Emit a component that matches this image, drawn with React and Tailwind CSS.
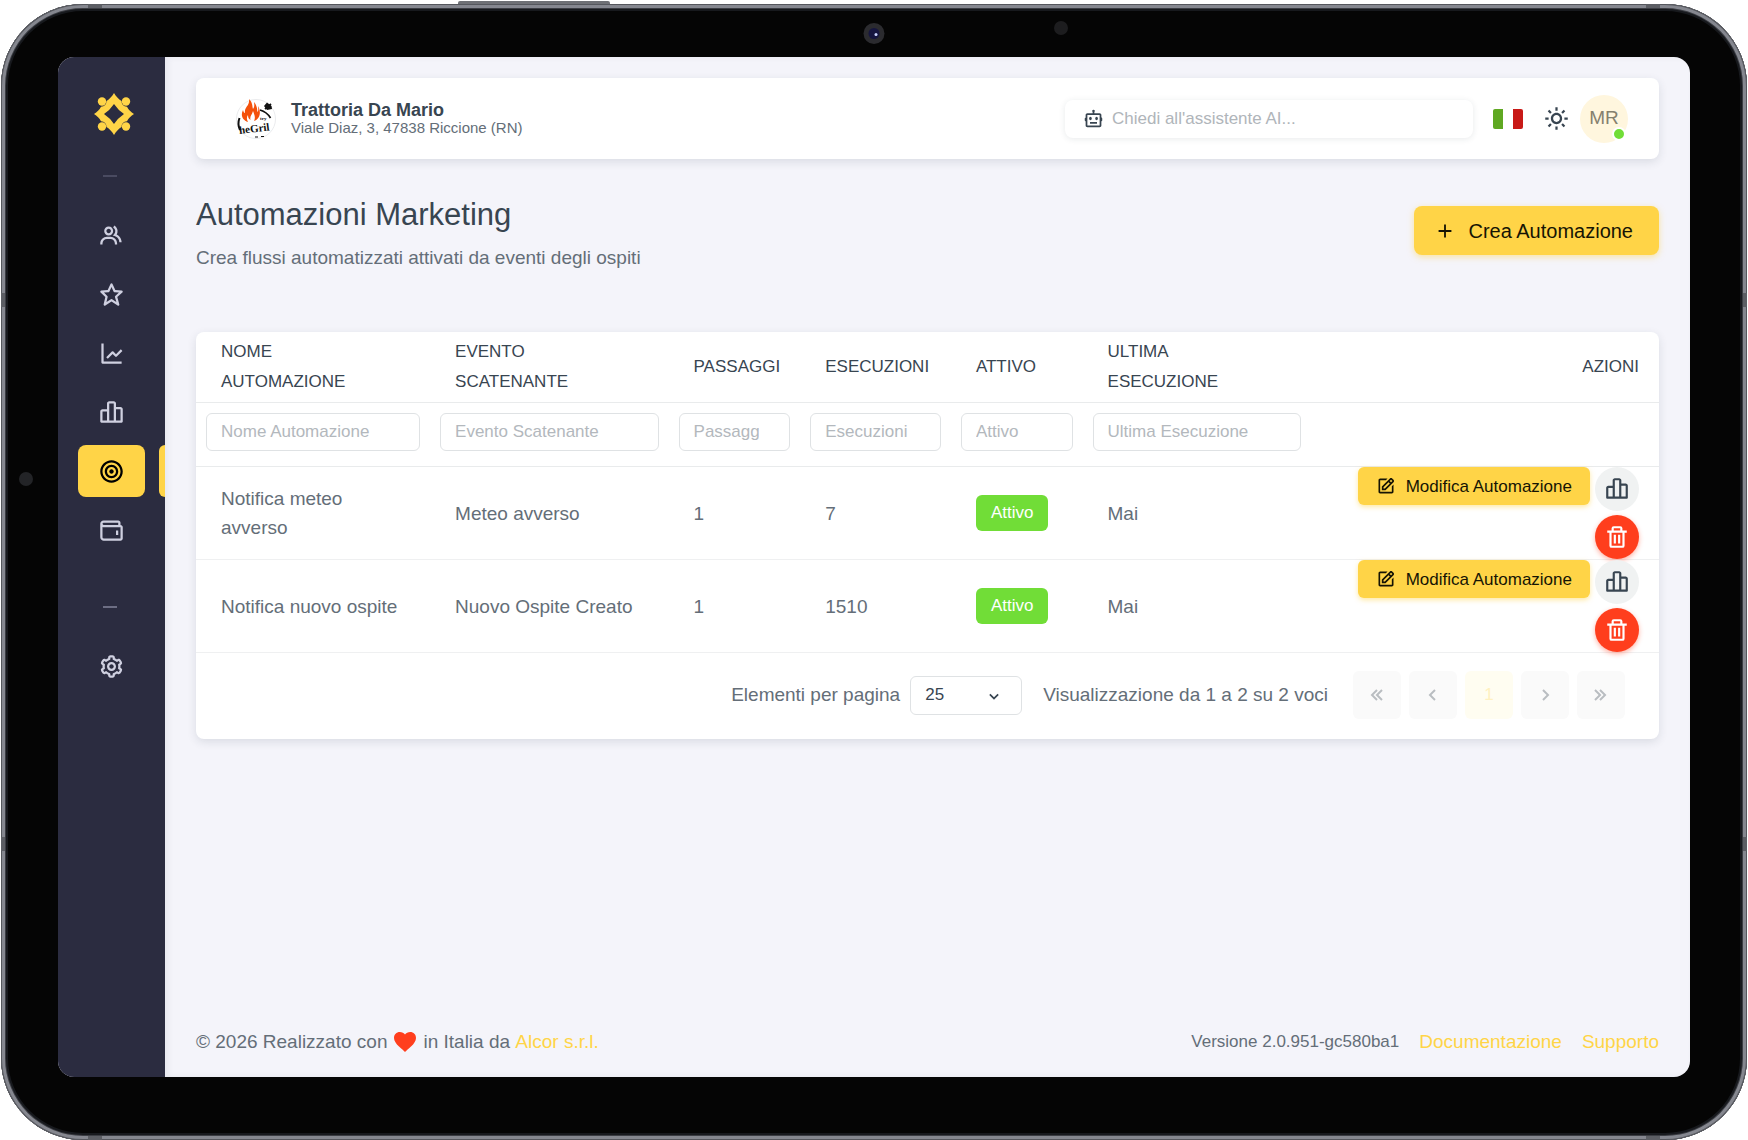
import { useState } from "react";
import {
  BiBarChartAlt2,
  BiBot,
  BiBullseye,
  BiChevronDown,
  BiChevronLeft,
  BiChevronRight,
  BiChevronsLeft,
  BiChevronsRight,
  BiCog,
  BiEdit,
  BiGroup,
  BiLineChart,
  BiPlus,
  BiStar,
  BiSun,
  BiTrash,
  BiWallet,
} from "react-icons/bi";

const CARD = "rounded-lg bg-white shadow-[0_3px_10px_rgba(34,48,62,0.12)]";

const NAV = [
  { label: "Ospiti", icon: BiGroup },
  { label: "Recensioni", icon: BiStar },
  { label: "Andamento", icon: BiLineChart },
  { label: "Statistiche", icon: BiBarChartAlt2 },
  { label: "Marketing", icon: BiBullseye, active: true },
  { label: "Pagamenti", icon: BiWallet },
];

const COLUMNS = [
  { key: "name", label: "Nome Automazione", width: "w-[16%]" },
  { key: "event", label: "Evento Scatenante", width: "w-[16.3%]" },
  { key: "steps", label: "Passaggi", width: "w-[9%]" },
  { key: "runs", label: "Esecuzioni", width: "w-[10.3%]" },
  { key: "active", label: "Attivo", width: "w-[9%]" },
  { key: "last", label: "Ultima Esecuzione", width: "w-[15.6%]" },
];

const AUTOMATIONS = [
  { id: 1, name: "Notifica meteo avverso", event: "Meteo avverso", steps: 1, runs: 7, last: "Mai" },
  { id: 2, name: "Notifica nuovo ospite", event: "Nuovo Ospite Creato", steps: 1, runs: 1510, last: "Mai" },
];

function BrandLogo() {
  return (
    <svg viewBox="0 0 40 42" className="h-[42px] w-10" fill="#ffd447" aria-hidden="true">
      <path
        fillRule="evenodd"
        d="M20 0 C22 3.5 24.5 6 27.5 8 C27.5 11.5 29.5 13.5 33 13.8 C34.5 16.8 37 19.2 40 21 C37 22.8 34.5 25.2 33 28.2 C29.5 28.5 27.5 30.5 27.5 34 C24.5 36 22 38.5 20 42 C18 38.5 15.5 36 12.5 34 C12.5 30.5 10.5 28.5 7 28.2 C5.5 25.2 3 22.8 0 21 C3 19.2 5.5 16.8 7 13.8 C10.5 13.5 12.5 11.5 12.5 8 C15.5 6 18 3.5 20 0 Z M20 11 Q16 17 10 21 Q16 25 20 31 Q24 25 30 21 Q24 17 20 11 Z"
      />
      <circle cx="8" cy="8.5" r="4.2" />
      <circle cx="32" cy="8.5" r="4.2" />
      <circle cx="8" cy="33.5" r="4.2" />
      <circle cx="32" cy="33.5" r="4.2" />
    </svg>
  );
}

function RestaurantLogo() {
  return (
    <svg viewBox="0 0 40 40" className="size-10 shrink-0" aria-hidden="true">
      <circle cx="20" cy="20" r="19.5" fill="#fff" stroke="#e4e6e8" strokeWidth="0.8" />
      <path
        fill="#f4510b"
        d="M13 0 C17 4 16 7 17 10 C18.500 8 18.500 6 18 3 C21.500 7 21 11 21.500 13 C22.500 12 22.500 10 22 7 C25.500 13 24 20 18 22 C20 18 18 15 17 12 C16 16 13.500 17 14.500 21 C12.500 20 12 18 12 16 C10.500 18 10.500 20 12 23 C6 21 4.500 16 7 11 C7.500 13 8 14 9 14 C8 8 14 7 13 0 Z"
      />
      <path d="M24 11 Q31 13 34.500 19 M29 10 L35 5" fill="none" stroke="#111" strokeWidth="1.800" />
      <path d="M28 7 L31 3.500 L35.500 7 L36 10 L31 11 Z" fill="#111" />
      <path d="M3.500 19 C2 23 2 27 4 31" fill="none" stroke="#111" strokeWidth="2" />
      <text x="24" y="21" fontSize="5" fontWeight="700" fontFamily="Liberation Serif, serif" fill="#111">
        try
      </text>
      <text
        x="3"
        y="33"
        fontSize="11"
        fontWeight="700"
        fontFamily="Liberation Serif, serif"
        fill="#111"
        transform="rotate(-7 20 30)"
      >
        heGril
      </text>
      <path d="M19 38 H22 M25 37.500 H28" stroke="#111" strokeWidth="1.200" />
    </svg>
  );
}

function Sidebar() {
  return (
    <aside className="flex w-[107px] shrink-0 flex-col items-center bg-[#2b2c40] pt-9 text-[#cfd0e0]">
      <a href="#home" aria-label="Home" className="ml-1">
        <BrandLogo />
      </a>
      <hr className="mt-10 mr-1 h-0.5 w-3.5 border-0 bg-[#4a4b61]" />
      <nav className="mt-8 flex w-full flex-col gap-[7px]">
        {NAV.map(({ label, icon: Icon, active }) => (
          <div key={label} className="flex items-center justify-between pl-5">
            <a
              href={`#${label.toLowerCase()}`}
              aria-label={label}
              className={
                active
                  ? "flex h-[52px] w-[67px] items-center justify-center rounded-lg bg-[#ffd447] text-black"
                  : "flex h-[52px] w-[67px] items-center justify-center rounded-lg"
              }
            >
              <Icon size={27} />
            </a>
            {active && <span className="h-[52px] w-1.5 rounded-l-md bg-[#ffd447]" />}
          </div>
        ))}
      </nav>
      <hr className="mt-[50px] mr-1 h-0.5 w-3.5 border-0 bg-[#6d6e84]" />
      <a href="#impostazioni" aria-label="Impostazioni" className="mt-8 flex h-[52px] w-[67px] items-center justify-center">
        <BiCog size={27} />
      </a>
    </aside>
  );
}

function Topbar() {
  return (
    <header className={`${CARD} flex h-[81px] items-center pr-[31px] pl-10`}>
      <RestaurantLogo />
      <div className="ml-[15px]">
        <div className="text-[18px] leading-[18px] font-bold text-[#384551]">Trattoria Da Mario</div>
        <div className="text-[15px] leading-[18px]">Viale Diaz, 3, 47838 Riccione (RN)</div>
      </div>
      <label className="ml-auto flex h-[38px] w-[408px] items-center gap-2 rounded-lg bg-white px-[18px] shadow-[0_1px_6px_rgba(34,48,62,0.10)]">
        <BiBot size={21} className="shrink-0 text-[#384551]" />
        <input
          type="text"
          aria-label="Assistente AI"
          placeholder="Chiedi all'assistente AI..."
          className="w-full bg-transparent text-[17px] outline-none placeholder:text-[#b0b5ba]"
        />
      </label>
      <button type="button" aria-label="Italiano" className="ml-5 flex h-5 w-[30px] overflow-hidden rounded-xs">
        <span className="h-full flex-1 bg-[#5fa822]" />
        <span className="h-full flex-1 bg-white" />
        <span className="h-full flex-1 bg-[#c81a17]" />
      </button>
      <button type="button" aria-label="Tema" className="ml-5 text-[#384551]">
        <BiSun size={27} />
      </button>
      <button
        type="button"
        className="relative ml-2.5 flex size-12 items-center justify-center rounded-full bg-[#fff6de] text-[19px] text-[#85806e]"
      >
        MR
        <span className="absolute right-0.5 bottom-0.5 size-3.5 rounded-full border-2 border-white bg-[#71dd37]" />
      </button>
    </header>
  );
}

function RowActions() {
  return (
    <div className="flex flex-wrap items-start justify-end gap-x-[5px] gap-y-1">
      <button
        type="button"
        className="flex h-[38px] items-center gap-2.5 rounded-md bg-[#ffd447] px-[18px] text-[17px] whitespace-nowrap text-[#161404] shadow-[0_2px_5px_rgba(255,212,71,0.5)]"
      >
        <BiEdit size={20} />
        Modifica Automazione
      </button>
      <button
        type="button"
        aria-label="Statistiche"
        className="flex size-11 items-center justify-center rounded-full bg-[#f0f2f2] text-[#384551]"
      >
        <BiBarChartAlt2 size={26} />
      </button>
      <button
        type="button"
        aria-label="Elimina"
        className="flex size-11 items-center justify-center rounded-full bg-[#ff3e1d] text-white shadow-[0_2px_5px_rgba(255,62,29,0.4)]"
      >
        <BiTrash size={26} />
      </button>
    </div>
  );
}

function AutomationsTable() {
  return (
    <table className="w-full table-fixed border-collapse text-left">
      <thead className="text-[17px] text-[#384551]">
        <tr className="border-b border-[#e9ebec]">
          {COLUMNS.map((col) => (
            <th
              key={col.key}
              scope="col"
              className={`${col.width} py-[5px] pl-[25px] leading-[30px] font-normal uppercase`}
            >
              <span className="block max-w-36">{col.label}</span>
            </th>
          ))}
          <th scope="col" className="py-[5px] pr-5 text-right leading-[30px] font-normal uppercase">
            Azioni
          </th>
        </tr>
        <tr className="border-b border-[#e9ebec]">
          {COLUMNS.map((col) => (
            <td key={col.key} className="px-2.5 pt-2.5 pb-[15px]">
              <input
                type="text"
                aria-label={`Filtra ${col.label}`}
                placeholder={col.label}
                className="block h-[38px] w-full rounded-md border border-[#dfe2e4] pr-[30px] pl-3.5 text-[17px] outline-none placeholder:text-[#b3b8bd]"
              />
            </td>
          ))}
          <td />
        </tr>
      </thead>
      <tbody className="text-[19px] leading-[29px]">
        {AUTOMATIONS.map((row) => (
          <tr key={row.id} className="border-b border-[#eff0f1]">
            <td className="pr-5 pl-[25px]">{row.name}</td>
            <td className="pl-[25px]">{row.event}</td>
            <td className="pl-[25px]">{row.steps}</td>
            <td className="pl-[25px]">{row.runs}</td>
            <td className="pl-[25px]">
              <span className="inline-block rounded-md bg-[#71dd37] px-[15px] py-1 align-middle text-[17px] leading-7 text-white">
                Attivo
              </span>
            </td>
            <td className="pl-[25px]">{row.last}</td>
            <td className="pr-5 pl-2.5">
              <RowActions />
            </td>
          </tr>
        ))}
      </tbody>
    </table>
  );
}

function Pagination() {
  const [size, setSize] = useState("25");
  const pageButton = "flex size-12 items-center justify-center rounded-md bg-[#fafafa] text-[#b9bdc1]";

  return (
    <div className="flex items-center justify-end pt-[18px] pr-[34px] pb-5 text-[19px]">
      <label htmlFor="page-size">Elementi per pagina</label>
      <div className="relative ml-2.5">
        <select
          id="page-size"
          value={size}
          onChange={(e) => setSize(e.target.value)}
          className="block h-[39px] w-28 appearance-none rounded-md border border-[#dfe2e4] bg-white pl-3.5 text-[17px] text-[#384551]"
        >
          <option>10</option>
          <option>25</option>
          <option>50</option>
        </select>
        <BiChevronDown size={20} className="pointer-events-none absolute top-2.5 right-[18px] text-[#384551]" />
      </div>
      <span className="ml-[21px]">Visualizzazione da 1 a 2 su 2 voci</span>
      <div className="ml-[25px] flex gap-2">
        <button type="button" aria-label="Prima pagina" className={pageButton}>
          <BiChevronsLeft size={24} />
        </button>
        <button type="button" aria-label="Pagina precedente" className={pageButton}>
          <BiChevronLeft size={24} />
        </button>
        <button
          type="button"
          className="flex size-12 items-center justify-center rounded-md bg-[#fffdf1] text-[17px] text-[#fff1c0]"
        >
          1
        </button>
        <button type="button" aria-label="Pagina successiva" className={pageButton}>
          <BiChevronRight size={24} />
        </button>
        <button type="button" aria-label="Ultima pagina" className={pageButton}>
          <BiChevronsRight size={24} />
        </button>
      </div>
    </div>
  );
}

function Footer() {
  return (
    <footer className="mt-auto flex items-center justify-between text-[19px]">
      <div className="flex items-center">
        © 2026 Realizzato con
        <svg viewBox="0 0 22 20" className="mx-[7px] h-5 w-[22px]" fill="#ff3e1d" aria-hidden="true">
          <path d="M11 20 C9 17.5 0 12 0 6 C0 2.5 2.5 0 5.8 0 C8 0 10 1 11 2.6 C12 1 14 0 16.2 0 C19.5 0 22 2.5 22 6 C22 12 13 17.5 11 20 Z" />
        </svg>
        in Italia da&nbsp;
        <a href="#alcor" className="text-[#ffd447]">
          Alcor s.r.l.
        </a>
      </div>
      <div className="flex items-center gap-5">
        <span className="text-[17px]">Versione 2.0.951-gc580ba1</span>
        <a href="#documentazione" className="text-[#ffd447]">
          Documentazione
        </a>
        <a href="#supporto" className="text-[#ffd447]">
          Supporto
        </a>
      </div>
    </footer>
  );
}

// Sensors, camera and antenna bands drawn over the tablet's bezel
function BezelDetails() {
  return (
    <>
      <span className="absolute -top-[3px] left-[457px] h-[3px] w-[152px] rounded-t-xs bg-[#6e7075]" />
      <span className="absolute top-[19px] left-1/2 flex size-[21px] -translate-x-1/2 items-center justify-center rounded-full bg-[#2b2b2f]">
        <span className="flex size-[11px] items-center justify-center rounded-full bg-[#15153f]">
          <span className="mt-0.5 ml-1 size-[3px] rounded-full bg-[#c9d4ff]" />
        </span>
      </span>
      <span className="absolute top-[17px] left-[1053px] size-3.5 rounded-full bg-[#1d1d1f]" />
      <span className="absolute top-[468px] left-[18px] size-3.5 rounded-full bg-[#232427]" />
      <span className="absolute top-0 left-[87px] h-1 w-3.5 bg-[#5c5e64]" />
      <span className="absolute top-0 right-[87px] h-1 w-3.5 bg-[#5c5e64]" />
      <span className="absolute bottom-0 left-[87px] h-1 w-3.5 bg-[#5c5e64]" />
      <span className="absolute right-[87px] bottom-0 h-1 w-3.5 bg-[#5c5e64]" />
      <span className="absolute top-[289px] left-0 h-3.5 w-1 bg-[#5c5e64]" />
      <span className="absolute top-[289px] right-0 h-3.5 w-1 bg-[#5c5e64]" />
      <span className="absolute bottom-[289px] left-0 h-3.5 w-1 bg-[#5c5e64]" />
      <span className="absolute right-0 bottom-[289px] h-3.5 w-1 bg-[#5c5e64]" />
    </>
  );
}

export default function App() {
  return (
    <div className="flex min-h-screen bg-white px-px pt-1 font-['Liberation_Sans',Arial,sans-serif]">
      <div className="relative flex flex-1 rounded-[82px] bg-[#050505] px-[57px] pt-[53px] pb-[63px] shadow-[inset_0_0_0_1px_#55575d,inset_0_0_0_4px_#85878f,inset_0_0_0_5px_#3b3d43,inset_0_0_0_7px_#17191d]">
        <BezelDetails />
        <div className="flex min-w-0 flex-1 overflow-hidden rounded-2xl bg-[#f4f4fa] text-[#646e78]">
          <Sidebar />
          <main className="flex min-w-0 flex-1 flex-col px-[31px] pt-[21px] pb-[21px] shadow-[inset_3px_0_6px_rgba(34,48,62,0.06)]">
            <Topbar />
            <div className="mt-[38px] flex items-start justify-between">
              <div>
                <h1 className="text-[31px] leading-9 text-[#384551]">Automazioni Marketing</h1>
                <p className="mt-3 text-[19px] leading-[26px]">Crea flussi automatizzati attivati da eventi degli ospiti</p>
              </div>
              <button
                type="button"
                className="mt-[9px] flex h-[49px] items-center gap-3 rounded-lg bg-[#ffd447] pr-[26px] pl-5 text-[20px] text-[#161404] shadow-[0_2px_6px_rgba(255,212,71,0.5)]"
              >
                <BiPlus size={22} />
                Crea Automazione
              </button>
            </div>
            <section className={`${CARD} mt-[61px]`}>
              <AutomationsTable />
              <Pagination />
            </section>
            <Footer />
          </main>
        </div>
      </div>
    </div>
  );
}
